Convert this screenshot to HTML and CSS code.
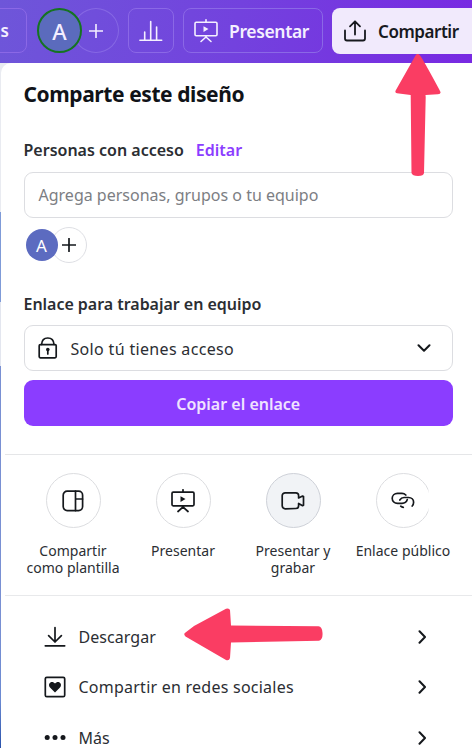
FILE: index.html
```html
<!DOCTYPE html>
<html lang="es">
<head>
<meta charset="utf-8">
<title>Comparte este diseño</title>
<link rel="stylesheet" href="styles.css">
</head>
<body>
<div class="app">
  <header class="topbar">
    <div class="tool tool-cut">as</div>
    <div class="people">
      <span class="me">A</span>
      <span class="add"><svg width="14" height="14" viewBox="0 0 14 14"><path d="M7 .2v13.600M.2 7h13.600"/></svg></span>
    </div>
    <div class="tool tool-chart"><svg width="24" height="22" viewBox="0 0 24 22"><path d="M.9 20.200h21.800M5.700 20V12M11.700 20V1.500M17.600 20V7"/></svg></div>
    <div class="tool tool-present">
      <svg width="24" height="24" viewBox="0 0 24 24"><path d="M12 .8v2.400M2.200 3.200h19.600a1.200 1.200 0 0 1 1.200 1.200v11.200a1.200 1.200 0 0 1-1.200 1.200H2.200A1.200 1.200 0 0 1 1 15.600V4.400a1.200 1.200 0 0 1 1.200-1.200zM12 17v1l-5 4.500M12 18l5 4.500"/><path class="solid" d="M9.500 7.300v5.600l5-2.800z"/></svg>
      <span class="t-present">Presentar</span>
    </div>
    <div class="share">
      <svg width="22" height="22" viewBox="0 0 22 22"><path d="M1 10.500v8a2 2 0 0 0 2 2h16a2 2 0 0 0 2-2v-8M11 14.500V1.500M6 6.300l5-5 5 5"/></svg>
      <span class="t-share">Compartir</span>
    </div>
  </header>
  <main class="panel">
    <section class="access">
      <h1>Comparte este diseño</h1>
      <div class="heading"><span>Personas con acceso</span><a class="edit">Editar</a></div>
      <div class="field"><span class="hint">Agrega personas, grupos o tu equipo</span></div>
      <div class="members">
        <span class="member">A</span>
        <span class="member-add"><svg width="14" height="14" viewBox="0 0 14 14"><path d="M7 .6v12.800M.6 7h12.800"/></svg></span>
      </div>
      <div class="heading"><span class="t-link">Enlace para trabajar en equipo</span></div>
      <div class="field select">
        <svg width="20" height="22" viewBox="0 0 20 22"><rect x="1.200" y="7.600" width="17" height="13.200" rx="1.200"/><path d="M3.600 7.500C3.800 3.500 6 1 9.800 1S15.800 3.500 16 7.500M9.800 13v4"/><circle class="solid" cx="9.800" cy="12.600" r="1.800"/></svg>
        <span class="t-only">Solo tú tienes acceso</span>
        <svg class="down" width="14" height="8" viewBox="0 0 14 8"><path d="M1.500 1.300L7 6.800l5.500-5.500"/></svg>
      </div>
      <div class="copy"><span class="t-copy">Copiar el enlace</span></div>
    </section>
    <section class="actions">
      <div class="action">
        <span class="disc"><svg width="22" height="22" viewBox="0 0 22 22"><rect x="1.200" y="1.200" width="19.400" height="19.400" rx="4"/><path d="M13.500 1.200v19.400M13.500 9h7"/></svg></span>
        <span class="name">Compartir<br>como plantilla</span>
      </div>
      <div class="action">
        <span class="disc"><svg width="24" height="24" viewBox="0 0 24 24"><path d="M12 .8v2.400M2.200 3.200h19.600a1.200 1.200 0 0 1 1.200 1.200v11.200a1.200 1.200 0 0 1-1.200 1.200H2.200A1.200 1.200 0 0 1 1 15.600V4.400a1.200 1.200 0 0 1 1.200-1.200zM12 17v1l-5 4.500M12 18l5 4.500"/><path class="solid" d="M9.500 7.300v5.600l5-2.800z"/></svg></span>
        <span class="name">Presentar</span>
      </div>
      <div class="action">
        <span class="disc active"><svg width="24" height="20" viewBox="0 0 24 20"><path d="M4.200 1.800h10.600a2.800 2.800 0 0 1 2.800 2.800v2.400l4-1.900.9.400v8.800l-.9.400-4-2.300v2.300a2.800 2.800 0 0 1-2.800 2.800l-10.600.3a3 3 0 0 1-3-3v-10a3 3 0 0 1 3-3z"/></svg></span>
        <span class="name">Presentar y<br>grabar</span>
      </div>
      <div class="action">
        <span class="disc clipped"><svg width="24" height="18" viewBox="0 0 24 18"><path d="M14.800 3C13.800 1.900 12.500 1.300 11 1.300H6.500C3.500 1.300 1.200 3.500 1.200 6.300s2.300 5 5.300 5H11c2.600 0 4.500-1.300 5.300-3.800M8.800 8C9.800 6.300 11.300 5.500 13 5.500h4.500c3 0 5.100 2.100 5.100 4.800 0 1.500-.5 2.700-1.400 3.700M9.700 14.200c.8.700 1.600 1 2.600 1.100"/></svg></span>
        <span class="name">Enlace público</span>
      </div>
    </section>
    <section class="menu">
      <div class="row">
        <svg width="22" height="22" viewBox="0 0 22 22"><path d="M1.300 19.800h19.400M11 1.500v14.500M4.600 9.700L11 16l6.400-6.300"/></svg>
        <span>Descargar</span>
        <svg class="next" width="8" height="14" viewBox="0 0 8 14"><path d="M1.500 1.300L7 7l-5.500 5.700"/></svg>
      </div>
      <div class="row">
        <svg width="22" height="22" viewBox="0 0 22 22"><rect x="1.300" y="1.300" width="19.400" height="19.400" rx="1.500"/><path class="solid" d="M11 16.400L6 11.400c-1.500-1.700-1.300-4 .4-5 1.600-.9 3.500-.3 4.600 1.200 1.100-1.500 3-2.100 4.600-1.200 1.700 1 1.900 3.300.4 5z"/></svg>
        <span class="m2">Compartir en redes sociales</span>
        <svg class="next" width="8" height="14" viewBox="0 0 8 14"><path d="M1.500 1.300L7 7l-5.500 5.700"/></svg>
      </div>
      <div class="row">
        <svg width="22" height="22" viewBox="0 0 22 22"><g class="solid"><circle cx="3.200" cy="10.500" r="2.500"/><circle cx="11" cy="10.500" r="2.500"/><circle cx="19" cy="10.500" r="2.500"/></g></svg>
        <span class="m3">Más</span>
        <svg class="next" width="8" height="14" viewBox="0 0 8 14"><path d="M1.500 1.300L7 7l-5.500 5.700"/></svg>
      </div>
    </section>
  </main>
  <svg class="arrow arrow-up" width="46" height="122" viewBox="0 0 46 122"><path d="M20.500 1.500q2-2.800 4.500 0 2 2 19 33.500l1.500 3q.5 2.500-3 2.300L30.500 41l.2 2-1.700 76q-.3 3-6 3t-6.500-3L15.700 41 2 39.300q-2.500-.8-1.200-3Z"/></svg>
  <svg class="arrow arrow-left" width="140" height="53" viewBox="0 0 140 53"><path d="M1.500 28.500q-2.500-2.500 0-4L10 18 42 .8q3-1.200 4 1.200L47 17.500l87.500.8q3.500 0 4 6.500t-3.500 8L47 34.500 46 50q-.8 3-4 2Z"/></svg>
</div>
</body>
</html>
```
FILE: styles.css
```css
* { box-sizing: border-box; }
body { margin: 0; overflow: hidden; font-family: "Noto Sans", sans-serif; color: #2b2e33; }
svg { display: block; flex: none; fill: none; stroke: #15181c; stroke-width: 1.7; stroke-linecap: round; stroke-linejoin: round; }
.solid { fill: #15181c; stroke: none; }
span, h1, a { white-space: nowrap; }

.app {
  position: relative; width: 472px; height: 748px; overflow: hidden;
  display: flex; flex-direction: column;
  background: linear-gradient(#e9ebf1 0 212px, #7f9bd8 212px 302px, #e3e6ef 302px 366px, #7990d3 366px 620px, #6b8ad2 700px, #2952ab 748px);
}
.topbar {
  height: 63px; flex: none; padding-top: 8px; display: flex; align-items: flex-start;
  background: linear-gradient(100deg, #6e56d9, #7342de 50%, #7829e2);
  color: #f4efff; font-weight: 600; font-size: 17px;
}
.topbar svg { stroke: #f4efff; stroke-width: 1.6; }
.topbar .solid { fill: #f4efff; stroke: none; }
.tool { height: 45px; border: 1px solid #8b68e6; border-radius: 8px; display: flex; align-items: center; flex: none; }
.tool-cut { width: 35px; margin-left: -8px; padding-right: 17px; justify-content: flex-end; }
.people { display: flex; margin-left: 10px; }
.me { width: 45px; height: 45px; border: 2px solid #157321; border-radius: 50%; background: #5b6bbd; display: grid; place-items: center; font-size: 22px; font-weight: 500; z-index: 1; }
.add { width: 46px; height: 45px; margin-left: -9px; border: 1px solid #8668e4; border-radius: 50%; display: grid; place-items: center; }
.tool-chart { width: 46px; margin-left: 9px; justify-content: center; }
.tool-present { width: 140px; margin-left: 9px; padding-left: 10px; gap: 11px; }
.t-present { letter-spacing: -.6px; font-size: 17.500px; letter-spacing: -.35px; }
.share { width: 150px; flex: none; height: 46px; margin-left: 9px; padding-left: 12px; border-radius: 8px; display: flex; align-items: center; gap: 12px; background: #f1eafc; color: #17191e; }
.share svg { stroke: #17191e; stroke-width: 1.8; }
.topbar .share svg { stroke: #17191e; }
.t-share { letter-spacing: -.45px; }

.panel { flex: 1; margin-left: 1px; background: #fff; border-radius: 10px 0 0 8px; }
.access { padding: 14px 19px 0 22.500px; height: 391px; }
h1 { margin: 0; font-size: 21px; font-weight: 700; line-height: 35px; letter-spacing: -.42px; color: #101318; }
.heading { display: flex; gap: 12px; margin-top: 26px; height: 24px; line-height: 24px; font-size: 16px; font-weight: 600; }
.edit { color: #8b3dff; }
.t-link { letter-spacing: -.03px; }
.field { height: 46px; margin-top: 10px; border: 1px solid #dcdde1; border-radius: 9px; display: flex; align-items: center; padding: 0 14px; font-size: 16px; }
.hint { color: #7c7e83; }
.members { display: flex; align-items: center; margin: 9px 0 0 2px; height: 36px; }
.member { width: 32px; height: 32px; border-radius: 50%; background: #5c6bc0; color: #fff; display: grid; place-items: center; font-size: 17px; z-index: 1; }
.member-add { width: 36px; height: 36px; margin-left: -7px; border: 1px solid #dedfe4; border-radius: 50%; display: grid; place-items: center; }
.members + .heading { margin-top: 29px; }
.select { margin-top: 9px; height: 46px; padding: 0 21px 0 13px; gap: 13px; }
.t-only { letter-spacing: .33px; padding-top: 1px; }
.down { margin-left: auto; stroke-width: 2; }
.copy { height: 46px; margin-top: 9px; border-radius: 9px; background: #8b3dff; color: #f0e3ff; display: grid; place-items: center; font-size: 16px; font-weight: 600; }
.t-copy { padding-top: 1px; }

.actions { display: flex; margin-left: 4px; height: 141px; padding: 18px 0 0 13px; border-top: 1px solid #e5e6e8; }
.action { width: 110px; flex: none; display: flex; flex-direction: column; align-items: center; }
.disc { width: 55px; height: 55px; border: 1px solid #dcdde0; border-radius: 50%; display: grid; place-items: center; }
.active { background: #f1f3f6; border-color: #ced1d8; }
.clipped { clip-path: inset(0 2px 0 0); }
.name { margin-top: 14px; font-size: 14px; line-height: 17px; text-align: center; letter-spacing: .02px; }

.menu { margin-left: 4px; padding: 16px 46px 0 39px; border-top: 1px solid #e8e9eb; }
.row { height: 50.300px; display: flex; align-items: center; gap: 12.500px; font-size: 16px; letter-spacing: .05px; }
.m2 { letter-spacing: .24px; }
.next { margin-left: auto; stroke-width: 2; }

.arrow { position: absolute; stroke: none; fill: #fa3d63; }
.arrow-up { left: 395px; top: 54px; }
.arrow-left { left: 184px; top: 608px; }
```
